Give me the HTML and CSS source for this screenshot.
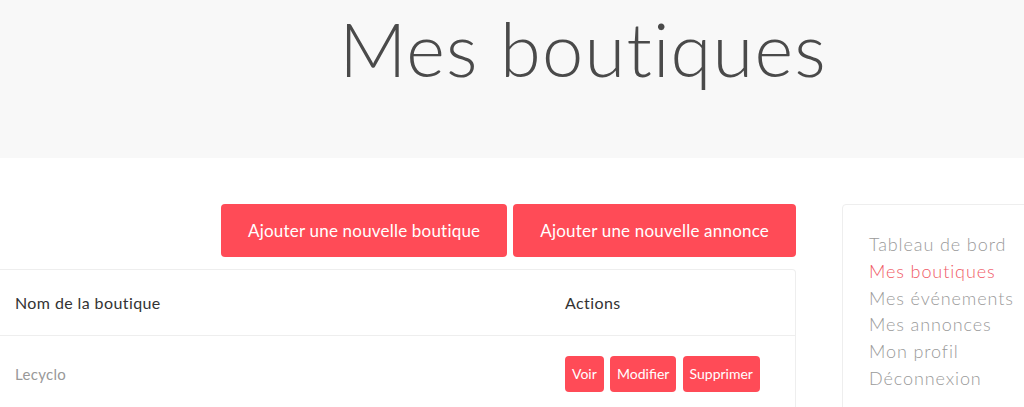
FILE: index.html
```html
<!DOCTYPE html>
<html lang="fr">
<head>
    <meta charset="UTF-8">
    <meta name="viewport" content="width=device-width, initial-scale=1.0">
    <title>Mes boutiques</title>
    <link rel="stylesheet" href="styles.css">
</head>
<body>
    <header class="page-header">
        <h1>Mes boutiques</h1>
    </header>

    <main class="page">
        <div class="content">
            <div class="top-actions">
                <a href="#" class="btn btn-big">Ajouter une nouvelle boutique</a>
                <a href="#" class="btn btn-big">Ajouter une nouvelle annonce</a>
            </div>

            <div class="shops">
                <table>
                    <thead>
                        <tr>
                            <th>Nom de la boutique</th>
                            <th class="col-actions">Actions</th>
                        </tr>
                    </thead>
                    <tbody>
                        <tr>
                            <td class="shop-name">Lecyclo</td>
                            <td class="col-actions">
                                <a href="#" class="btn btn-small">Voir</a>
                                <a href="#" class="btn btn-small">Modifier</a>
                                <a href="#" class="btn btn-small">Supprimer</a>
                            </td>
                        </tr>
                    </tbody>
                </table>
            </div>
        </div>

        <!-- menu du compte -->
        <aside class="sidebar">
            <ul>
                <li><a href="#">Tableau de bord</a></li>
                <li><a href="#" class="active">Mes boutiques</a></li>
                <li><a href="#">Mes événements</a></li>
                <li><a href="#">Mes annonces</a></li>
                <li><a href="#">Mon profil</a></li>
                <li><a href="#">Déconnexion</a></li>
            </ul>
        </aside>
    </main>
</body>
</html>
```

FILE: styles.css
```css
body {
    font-family: Lato, "Liberation Sans", sans-serif;
    background-color: #fff;
    color: #444;
    margin: 0;
    overflow: hidden;
}

a {
    text-decoration: none;
}

/* Header */
.page-header {
    background-color: #f8f8f8;
    height: 158px;
    padding-left: 142px;
    text-align: center;
}
.page-header h1 {
    margin: 0;
    padding-top: 4px;
    font-size: 74px;
    font-weight: 300;
    letter-spacing: 1.2px;
    color: #4a4a4a;
}

.page {
    display: flex;
    align-items: flex-start;
    padding-top: 46px;
}

.content {
    width: 796px;
    flex-shrink: 0;
}

.btn {
    display: inline-block;
    background-color: #ff4b57;
    color: #fff;
    border-radius: 4px;
}

.top-actions {
    display: flex;
    justify-content: flex-end;
    gap: 6px;
}
.btn-big {
    height: 53px;
    line-height: 53px;
    padding: 0 27px;
    font-size: 17px;
    letter-spacing: 0.2px;
}

.shops {
    margin-top: 12px;
    border: 1px solid #eee;
    border-left: none;
    border-radius: 0 4px 0 0;
}
.shops table {
    width: 100%;
    border-collapse: collapse;
}
.shops th {
    text-align: left;
    font-weight: 400;
    font-size: 16px;
    letter-spacing: 0.4px;
    color: #333;
    height: 65px;
    padding: 0 15px;
    border-bottom: 1px solid #eee;
}
.shops td {
    height: 76px;
    padding: 0 15px;
    font-size: 15px;
    letter-spacing: 0.3px;
}
.shops .col-actions {
    width: 215px;
    padding-left: 0;
}
.shop-name {
    color: #999;
}
.btn-small {
    height: 36px;
    line-height: 36px;
    padding: 0 7px;
    font-size: 14px;
    letter-spacing: 0;
    margin-right: 2px;
}

/* Sidebar */
.sidebar {
    margin-left: 46px;
    width: 220px;
    flex-shrink: 0;
    border: 1px solid #eee;
    border-radius: 4px;
    padding: 26px 0 24px 26px;
}
.sidebar ul {
    list-style: none;
    margin: 0;
    padding: 0;
}
.sidebar li {
    line-height: 26.8px;
    font-size: 18px;
    letter-spacing: 0.9px;
}
.sidebar a {
    color: #9a9a9a;
    font-weight: 300;
}
.sidebar a.active {
    color: #f05a66;
}
```
